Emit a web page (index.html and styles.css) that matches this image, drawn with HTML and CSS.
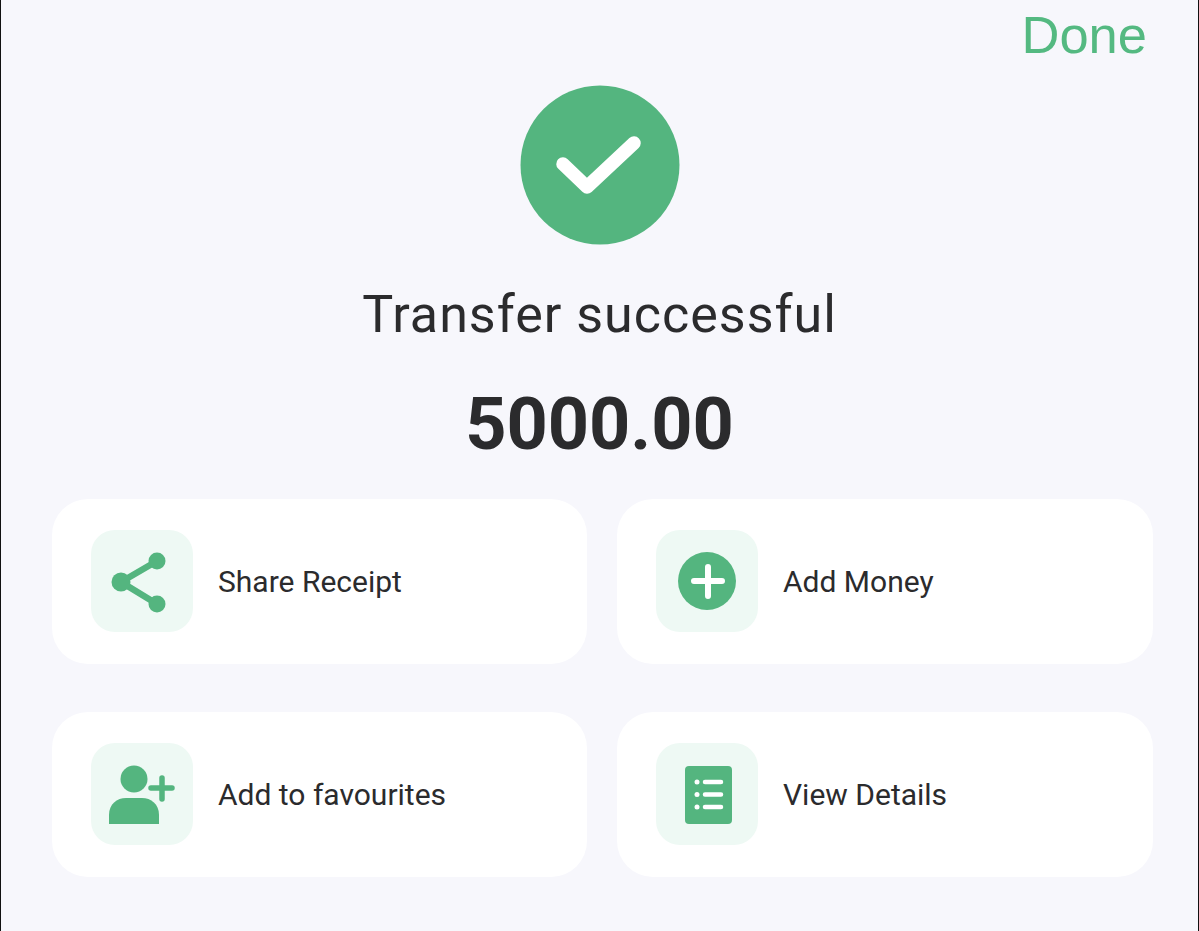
FILE: index.html
```html
<!DOCTYPE html>
<html lang="en">
  <head>
    <meta charset="UTF-8" />
    <meta name="viewport" content="width=device-width, initial-scale=1.0" />
    <title>Transfer successful</title>
    <link rel="stylesheet" href="styles.css">
  </head>
  <body>
    <div class="screen">
      <div class="top-bar">
        <span class="done">Done</span>
      </div>

      <div class="status">
        <svg class="status-icon" viewBox="0 0 160 160" width="160" height="160">
          <circle cx="80" cy="80" r="79.5" fill="#54b57f" />
          <path d="M43 79 L67 102 L114 58" fill="none" stroke="#fff" stroke-width="13.500" stroke-linecap="round" stroke-linejoin="round" />
        </svg>
        <h1 class="status-title">Transfer successful</h1>
        <p class="amount">5000.00</p>
      </div>

      <div class="actions">
        <div class="action-card">
          <div class="action-icon">
            <svg viewBox="0 0 102 102" width="102" height="102">
              <path d="M66 31 L30 52 L66 74" fill="none" stroke="#54b57f" stroke-width="6.500" />
              <circle cx="66" cy="31" r="8.500" fill="#54b57f" />
              <circle cx="30" cy="52" r="9.500" fill="#54b57f" />
              <circle cx="66" cy="74" r="8.500" fill="#54b57f" />
            </svg>
          </div>
          <span class="action-label">Share Receipt</span>
        </div>

        <div class="action-card">
          <div class="action-icon">
            <svg viewBox="0 0 102 102" width="102" height="102">
              <circle cx="51" cy="51" r="29" fill="#54b57f" />
              <path d="M38 51 H66 M52 37 V66" fill="none" stroke="#fff" stroke-width="6" stroke-linecap="round" />
            </svg>
          </div>
          <span class="action-label">Add Money</span>
        </div>

        <div class="action-card">
          <div class="action-icon">
            <svg viewBox="0 0 102 102" width="102" height="102">
              <circle cx="43" cy="36" r="13.500" fill="#54b57f" />
              <path d="M18 81 V72 C18 61 26 55 35 55 H51 C60 55 68 61 68 72 V81 Z" fill="#54b57f" />
              <path d="M60 45 H81 M71 35 V56" fill="none" stroke="#54b57f" stroke-width="5.500" stroke-linecap="round" />
            </svg>
          </div>
          <span class="action-label">Add to favourites</span>
        </div>

        <div class="action-card">
          <div class="action-icon">
            <svg viewBox="0 0 102 102" width="102" height="102">
              <rect x="29" y="23" width="47" height="58" rx="4" fill="#54b57f" />
              <g fill="#fff">
                <circle cx="41" cy="39" r="2.500" />
                <circle cx="41" cy="51.500" r="2.500" />
                <circle cx="41" cy="64" r="2.500" />
              </g>
              <path d="M49 39 H65 M49 51.500 H65 M49 64 H65" fill="none" stroke="#fff" stroke-width="4.500" stroke-linecap="round" />
            </svg>
          </div>
          <span class="action-label">View Details</span>
        </div>
      </div>
    </div>
  </body>
</html>
```

FILE: styles.css
```css
body {
  font-family: Roboto, "Liberation Sans", sans-serif;
  margin: 0;
  padding: 0;
  background-color: #f7f7fc;
  color: #2b2b2d;
}
.screen {
  box-sizing: border-box;
  height: 931px;
  border-left: 1px solid #111;
  border-right: 1px solid #111;
  padding: 0 45px 0 51px;
  overflow: hidden;
}
.top-bar {
  display: flex;
  justify-content: flex-end;
  height: 85px;
  padding-right: 6px;
}
.done {
  color: #54b981;
  font-family: "Liberation Sans", Arial, sans-serif;
  font-size: 52.500px;
  line-height: 69px;
}
.status {
  display: flex;
  flex-direction: column;
  align-items: center;
  padding-right: 6px;
}
.status-icon {
  display: block;
}
.status-title {
  margin: 38px 0 0;
  font-size: 52px;
  font-weight: 400;
  line-height: 64px;
  letter-spacing: 1px;
}
.amount {
  margin: 36px 0 0;
  font-size: 72px;
  font-weight: 700;
  line-height: 84px;
}
.actions {
  display: grid;
  grid-template-columns: 535px 536px;
  column-gap: 30px;
  row-gap: 48px;
  margin-top: 32px;
}
.action-card {
  display: flex;
  align-items: center;
  gap: 25px;
  height: 165px;
  padding-left: 39px;
  background: #fff;
  border-radius: 36px;
}
.action-icon {
  width: 102px;
  height: 102px;
  margin-bottom: 1px;
  background: #eef9f4;
  border-radius: 24px;
}
.action-icon svg {
  display: block;
}
.action-label {
  font-size: 30px;
}
```
